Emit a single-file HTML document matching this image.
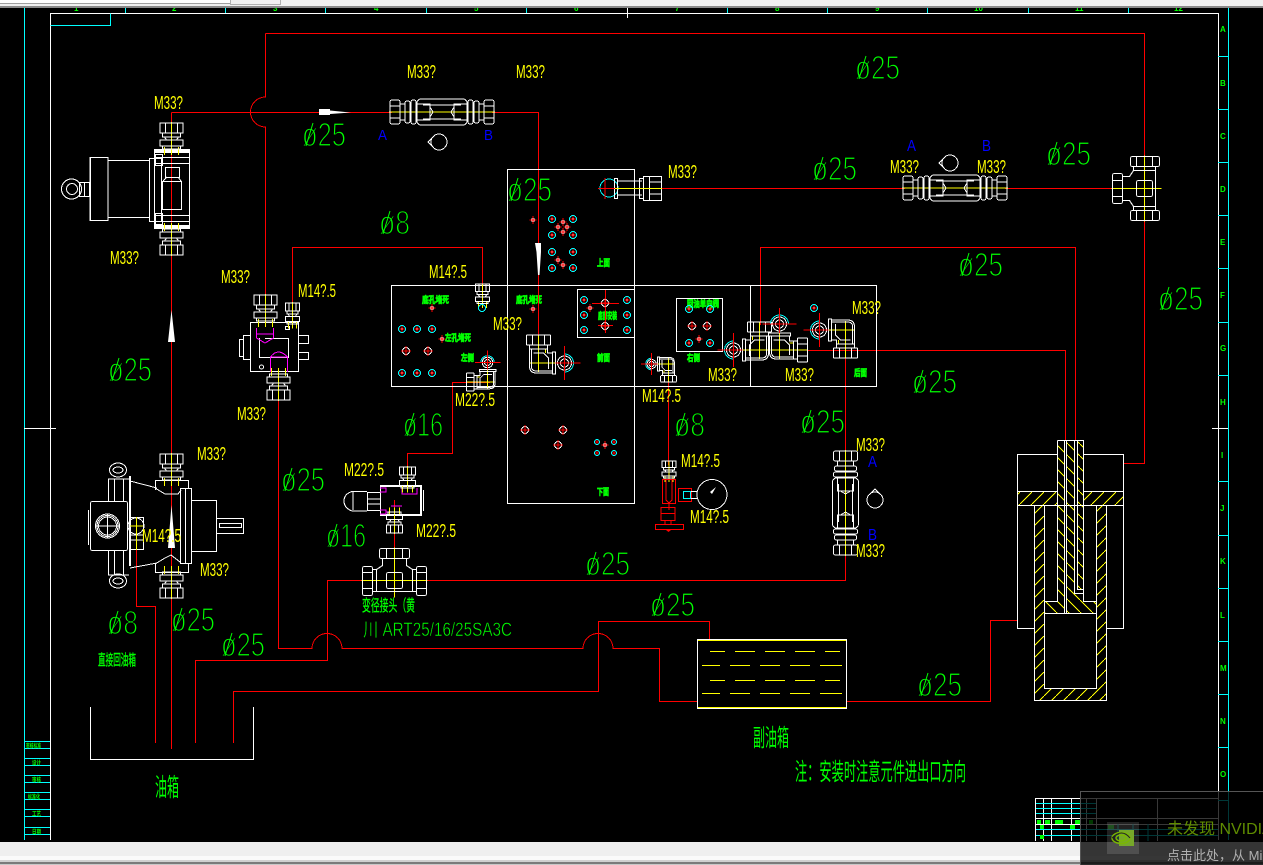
<!DOCTYPE html>
<html><head><meta charset="utf-8"><style>
html,body{margin:0;padding:0;background:#000;width:1263px;height:865px;overflow:hidden}
svg{display:block;position:absolute;left:0;top:0}
svg *{vector-effect:non-scaling-stroke}
.l{fill:none;shape-rendering:crispEdges;stroke-width:1}
.w{stroke:#fff}.r{stroke:#f00}.y{stroke:#ff0}.c{stroke:#0ff}.m{stroke:#f0f}
text{font-family:"Liberation Sans","Noto Sans CJK SC",sans-serif;stroke:none}
.yt{fill:#ff0;font-size:18px;stroke:#000;stroke-width:.2px}
.gt{fill:#0f0;font-size:33px;stroke:#000;stroke-width:1.35px}
.cn{fill:#0f0}
.sm{fill:#0f0;font-size:9px;font-weight:bold;stroke:#0f0;stroke-width:.7px}
.tk{fill:#0f0;font-size:8px;font-weight:bold}
.tb{fill:#0f0;font-size:6px;font-weight:bold;stroke:#0f0;stroke-width:.5px}
.bl{fill:#00f;font-size:16px}
</style></head><body>
<svg width="1263" height="865" viewBox="0 0 1263 865" xmlns="http://www.w3.org/2000/svg">
<defs>
<pattern id="hf" width="12" height="12" patternUnits="userSpaceOnUse"><path d="M0 12L12 0" stroke="#ff0" stroke-width="1" fill="none" shape-rendering="crispEdges"/></pattern>
<pattern id="hb" width="12" height="12" patternUnits="userSpaceOnUse"><path d="M0 0L12 12" stroke="#ff0" stroke-width="1" fill="none" shape-rendering="crispEdges"/></pattern>
<g id="f">
 <path class="l y" d="M0 -1V32M-7 24V32M7 24V32"/>
 <g class="l w"><rect x="-11.5" y="0" width="23" height="10"/><path d="M-6 0V10M6 0V10M-7 14L-5 17M7 14L5 17"/><rect x="-9" y="10" width="18" height="4"/><rect x="-11.5" y="17" width="23" height="6"/><rect x="-9" y="23" width="18" height="3"/></g>
</g>
<g id="m">
 <path class="l y" d="M-53 0H53"/>
 <g class="l w">
 <rect x="-52" y="-12" width="10" height="24" rx="2"/><path d="M-52 -6H-42M-52 6H-42"/><rect x="-42" y="-8" width="5" height="16"/><rect x="-37" y="-11" width="5" height="22" rx="2"/><rect x="-31" y="-12" width="5" height="24" rx="2"/>
 <rect x="42" y="-12" width="10" height="24" rx="2"/><path d="M42 -6H52M42 6H52"/><rect x="37" y="-8" width="5" height="16"/><rect x="32" y="-11" width="5" height="22" rx="2"/><rect x="26" y="-12" width="5" height="24" rx="2"/>
 <rect x="-25" y="-13" width="50" height="26" rx="4"/><path d="M-19 -7H19M-19 7H19"/><rect x="-25" y="-8" width="13" height="16"/><rect x="12" y="-8" width="13" height="16"/><path d="M-12 -5L-9 0L-12 5M12 -5L9 0L12 5"/>
 </g>
</g>
<g id="t">
 <path class="l y" d="M-33 0H17M0 -33V33M-11 -22V-18M11 -22V-18M-11 18V22M11 18V22"/>
 <g class="l w">
 <rect x="-14" y="-32" width="29" height="10" rx="2"/><path d="M-8 -32V-22M8 -32V-22"/>
 <rect x="-14" y="22" width="29" height="10" rx="2"/><path d="M-8 22V32M8 22V32"/>
 <rect x="-32" y="-15" width="10" height="30" rx="2"/><path d="M-32 -8H-22M-32 8H-22"/>
 <path d="M-22 -12H-15L-11 -18V-22M-22 12H-15L-11 18V22M11 -22V22"/><rect x="-8" y="-8" width="16" height="16" rx="2"/><path d="M-11 -18H11M-11 18H11"/>
 </g>
</g>
<g id="e">
 <path class="l y" d="M0 -28V9M-9 0H17M-7 -14V-10M7 -14V-10"/>
 <g class="l w">
 <rect x="-12" y="-28" width="24" height="10" rx="1"/><path d="M-6 -28V-18M6 -28V-18"/><rect x="-9" y="-18" width="18" height="4"/>
 <path d="M-9 -14V3Q-9 10 -2 10H14V-10H9V-14M-7 -14V4Q-7 8 -2 8H14"/><path d="M-5 -10H5L10 -5V6"/><rect x="14" y="-11" width="3" height="22"/>
 <circle cx="26" cy="0" r="7"/><circle cx="26" cy="0" r="4"/>
 </g>
 <path class="l c" d="M26 -9A9 9 0 0 1 26 9"/>
 <path class="l r" d="M17 0H42M26 -17V17"/>
</g>
<g id="h"><circle class="l c" r="3.5"/><circle r="1.2" fill="#fff"/><path class="l r" d="M-3 0H3M0 -3V3"/></g>
<g id="hs"><circle class="l c" r="2.5"/><path class="l r" d="M-2 0H2M0 -2V2"/></g>
<g id="x"><circle class="l w" r="3.5"/><path class="l r" d="M-5 0H5M0 -5V5"/></g>
<g id="xs"><circle r="2" fill="#fff"/><path class="l r" d="M-3.5 0H3.5M0 -4V4"/></g>
<g id="cv"><circle class="l w" r="8"/><path class="l w" d="M-5 -6L-11 0L-5 6"/></g>
</defs>
<rect width="1263" height="865" fill="#000"/>

<!-- green dimension text -->
<text class="gt" x="302" y="146" textLength="44" lengthAdjust="spacingAndGlyphs">ø25</text>
<text class="gt" x="855" y="79" textLength="45" lengthAdjust="spacingAndGlyphs">ø25</text>
<text class="gt" x="812" y="180" textLength="45" lengthAdjust="spacingAndGlyphs">ø25</text>
<text class="gt" x="1046" y="165" textLength="45" lengthAdjust="spacingAndGlyphs">ø25</text>
<text class="gt" x="507" y="201" textLength="45" lengthAdjust="spacingAndGlyphs">ø25</text>
<text class="gt" x="379" y="234" textLength="31" lengthAdjust="spacingAndGlyphs">ø8</text>
<text class="gt" x="958" y="276" textLength="45" lengthAdjust="spacingAndGlyphs">ø25</text>
<text class="gt" x="1158" y="310" textLength="45" lengthAdjust="spacingAndGlyphs">ø25</text>
<text class="gt" x="108" y="381" textLength="44" lengthAdjust="spacingAndGlyphs">ø25</text>
<text class="gt" x="912" y="393" textLength="45" lengthAdjust="spacingAndGlyphs">ø25</text>
<text class="gt" x="800" y="433" textLength="45" lengthAdjust="spacingAndGlyphs">ø25</text>
<text class="gt" x="281" y="491" textLength="44" lengthAdjust="spacingAndGlyphs">ø25</text>
<text class="gt" x="403" y="436" textLength="40" lengthAdjust="spacingAndGlyphs">ø16</text>
<text class="gt" x="326" y="547" textLength="40" lengthAdjust="spacingAndGlyphs">ø16</text>
<text class="gt" x="585" y="575" textLength="45" lengthAdjust="spacingAndGlyphs">ø25</text>
<text class="gt" x="650" y="616" textLength="45" lengthAdjust="spacingAndGlyphs">ø25</text>
<text class="gt" x="107" y="634" textLength="31" lengthAdjust="spacingAndGlyphs">ø8</text>
<text class="gt" x="171" y="631" textLength="44" lengthAdjust="spacingAndGlyphs">ø25</text>
<text class="gt" x="221" y="656" textLength="44" lengthAdjust="spacingAndGlyphs">ø25</text>
<text class="gt" x="674" y="436" textLength="31" lengthAdjust="spacingAndGlyphs">ø8</text>
<text class="gt" x="917" y="696" textLength="45" lengthAdjust="spacingAndGlyphs">ø25</text>
<path fill="none" stroke="#0f0" stroke-width="1" d="M306 146l7-23M859 79l7-23M816 180l7-23M1050 165l7-23M511 201l7-23M383 234l7-23M962 276l7-23M1162 310l7-23M112 381l7-23M916 393l7-23M804 433l7-23M285 491l7-23M407 436l7-23M330 547l7-23M589 575l7-23M654 616l7-23M111 634l7-23M175 631l7-23M225 656l7-23M678 436l7-23M921 696l7-23"/>

<!-- CJK labels -->
<text class="cn" x="362" y="611" font-size="16" textLength="53" lengthAdjust="spacingAndGlyphs" stroke="#0f0" stroke-width=".3" style="stroke:#0f0;stroke-width:.3px">变径接头（黄</text>
<text class="cn" x="363" y="636" font-size="19" textLength="149" lengthAdjust="spacingAndGlyphs" style="stroke:#000;stroke-width:.5px">川 ART25/16/25SA3C</text>
<text class="cn" x="98" y="665" font-size="15" textLength="38" lengthAdjust="spacingAndGlyphs" style="stroke:#0f0;stroke-width:.4px">直接回油箱</text>
<text class="cn" x="155" y="796" font-size="25" textLength="24" lengthAdjust="spacingAndGlyphs">油箱</text>
<text class="cn" x="753" y="746" font-size="24" textLength="36" lengthAdjust="spacingAndGlyphs">副油箱</text>
<text class="cn" x="795" y="780" font-size="24" textLength="171" lengthAdjust="spacingAndGlyphs">注：安装时注意元件进出口方向</text>

<!-- small bold labels -->
<text class="sm" x="422" y="303" textLength="27" lengthAdjust="spacingAndGlyphs">底孔堵死</text>
<text class="sm" x="516" y="303" textLength="26" lengthAdjust="spacingAndGlyphs">底孔堵死</text>
<text class="sm" x="445" y="341" textLength="26" lengthAdjust="spacingAndGlyphs">左孔堵死</text>
<text class="sm" x="461" y="361" textLength="13" lengthAdjust="spacingAndGlyphs">左侧</text>
<text class="sm" x="597" y="361" textLength="13" lengthAdjust="spacingAndGlyphs">前面</text>
<text class="sm" x="597" y="266" textLength="13" lengthAdjust="spacingAndGlyphs">上面</text>
<text class="sm" x="598" y="319" textLength="19" lengthAdjust="spacingAndGlyphs">底部安装</text>
<text class="sm" x="687" y="307" textLength="32" lengthAdjust="spacingAndGlyphs">回油单向阀</text>
<text class="sm" x="687" y="361" textLength="13" lengthAdjust="spacingAndGlyphs">右侧</text>
<text class="sm" x="854" y="376" textLength="13" lengthAdjust="spacingAndGlyphs">后面</text>
<text class="sm" x="597" y="495" textLength="12" lengthAdjust="spacingAndGlyphs">下面</text>

<!-- frame -->
<g class="l">
 <path class="c" d="M24.5 8V840M1228.5 8V840"/>
 <path class="w" d="M50.5 840V13.5H1218.5V840"/>
 <path class="c" d="M50.5 25.5H110.5V13.5"/>
 <path class="c" d="M125.5 8V13M225.5 8V13M325.5 8V13M426.5 8V13M526.5 8V13M727.5 8V13M827.5 8V13M927.5 8V13M1028.5 8V13M1128.5 8V13"/>
 <path class="w" d="M627.5 8V18"/>
 <path class="w" d="M24 428.5H56M1212 428.5H1228"/>
 <path class="c" d="M1218 56.5H1228M1218 109.5H1228M1218 162.5H1228M1218 215.5H1228M1218 268.5H1228M1218 322.5H1228M1218 375.5H1228M1218 481.5H1228M1218 535.5H1228M1218 588.5H1228M1218 641.5H1228M1218 694.5H1228M1218 747.5H1228M1218 800.5H1228"/>
 <path class="c" d="M24 741.5H50M24 748.5H50M24 758.5H50M24 765.5H50M24 775.5H50M24 782.5H50M24 792.5H50M24 799.5H50M24 809.5H50M24 816.5H50M24 827.5H50M24 834.5H50"/>
</g>
<g class="tk">
 <text x="74" y="11">1</text><text x="172" y="11">2</text><text x="273" y="11">3</text><text x="374" y="11">4</text><text x="474" y="11">5</text><text x="574" y="11">6</text><text x="675" y="11">7</text><text x="775" y="11">8</text><text x="875" y="11">9</text><text x="974" y="11">10</text><text x="1075" y="11">11</text><text x="1174" y="11">12</text>
 <text x="1220" y="32">A</text><text x="1220" y="86">B</text><text x="1220" y="139">C</text><text x="1220" y="192">D</text><text x="1220" y="245">E</text><text x="1220" y="298">F</text><text x="1220" y="351">G</text><text x="1220" y="405">H</text><text x="1221" y="458">I</text><text x="1220" y="511">J</text><text x="1220" y="564">K</text><text x="1220" y="618">L</text><text x="1220" y="671">M</text><text x="1220" y="724">N</text><text x="1220" y="777">O</text>
</g>
<g class="tb">
 <text x="26" y="748" textLength="15" lengthAdjust="spacingAndGlyphs">审核标准</text>
 <text x="32" y="765" textLength="9" lengthAdjust="spacingAndGlyphs">设计</text><text x="32" y="782" textLength="9" lengthAdjust="spacingAndGlyphs">审核</text>
 <text x="28" y="799" textLength="12" lengthAdjust="spacingAndGlyphs">标准化</text>
 <text x="32" y="816" textLength="9" lengthAdjust="spacingAndGlyphs">工艺</text><text x="32" y="834" textLength="9" lengthAdjust="spacingAndGlyphs">日期</text>
</g>

<!-- pipes -->
<g class="l r">
 <path d="M265.5 33.5H1144.5V463.5H1123"/>
 <path d="M265.5 33.5V97A15 15 0 0 0 265.5 127V296"/>
 <path d="M171.5 112.5H392M492 112.5H538.5V340"/>
 <path d="M171.5 112.5V749"/>
 <path d="M660 188.5H905M1005 188.5H1132"/>
 <path d="M278.5 372V648.5H312A15 15 0 0 1 342 648.5H583A15 15 0 0 1 613 648.5H659.5V701.5H697M847 701.5H990.5V620.5H1017"/>
 <path d="M195.5 743V660.5H327.5V580.5H845.5V555M845.5 451V350"/>
 <path d="M233.5 743V691.5H598.5V621.5H709.5V639"/>
 <path d="M155.5 743V606.5H136.5V520"/>
 <path d="M808 350.5H1065.5V440M760.5 325V247.5H1075.5V440"/>
 <path d="M292.5 305V247.5H482.5V286"/>
 <path d="M490 382.5H452.5V453.5H407.5V470"/>
 <path d="M394.5 500V548"/>
 <path d="M668.5 382V465"/>
</g>

<!-- tank -->
<path class="l w" d="M90.5 707V759.5H253.5V707"/>
<!-- reservoir -->
<rect class="l w" x="697.5" y="639.5" width="149" height="69"/>
<path class="l y" d="M698 640.5H846M698 707.5H846" />
<path class="l y" d="M710 651.5H725M735 651.5H755M765 651.5H785M795 651.5H815M825 651.5H840M702 665.5H720M730 665.5H750M760 665.5H780M790 665.5H810M820 665.5H842M710 680.5H725M735 680.5H755M765 680.5H785M795 680.5H815M825 680.5H840M702 693.5H720M730 693.5H750M760 693.5H780M790 693.5H810M820 693.5H842"/>

<!-- plates -->
<g class="l w">
 <rect x="391.5" y="285.5" width="485" height="101"/>
 <rect x="507.5" y="169.5" width="127" height="334"/>
 <path d="M750.5 285V386"/>
 <rect x="577.5" y="289.5" width="57" height="48"/>
 <rect x="676.5" y="298.5" width="46" height="53"/>
</g>
<path class="l r" d="M592 303.5H619M605.5 290V316M598 325.5H613M605.5 316V333"/>
<!-- holes -->
<use href="#h" x="552" y="219"/><use href="#h" x="573" y="219"/><use href="#h" x="552" y="235"/><use href="#h" x="573" y="235"/><use href="#h" x="552" y="252"/><use href="#h" x="573" y="252"/><use href="#h" x="552" y="268"/><use href="#h" x="573" y="268"/>
<use href="#xs" x="533" y="220"/><use href="#xs" x="563" y="222"/><use href="#xs" x="558" y="227"/><use href="#xs" x="567" y="227"/><use href="#xs" x="563" y="232"/><use href="#xs" x="558" y="260"/><use href="#xs" x="563" y="265"/><use href="#xs" x="432" y="308"/><use href="#xs" x="533" y="309"/>
<use href="#h" x="402" y="329"/><use href="#h" x="417" y="329"/><use href="#h" x="432" y="329"/><use href="#h" x="402" y="373"/><use href="#h" x="417" y="373"/><use href="#h" x="432" y="373"/>
<use href="#x" x="406" y="351"/><use href="#x" x="428" y="351"/><use href="#xs" x="442" y="339"/>
<use href="#h" x="584" y="300"/><use href="#h" x="627" y="300"/><use href="#h" x="584" y="315"/><use href="#h" x="627" y="315"/><use href="#h" x="584" y="330"/><use href="#h" x="627" y="330"/>
<use href="#x" x="605" y="303"/><use href="#x" x="605" y="326"/><use href="#xs" x="590" y="308"/>
<use href="#x" x="525" y="430"/><use href="#x" x="563" y="430"/><use href="#x" x="558" y="445"/>
<use href="#hs" x="597" y="442"/><use href="#hs" x="614" y="442"/><use href="#hs" x="597" y="453"/><use href="#hs" x="614" y="453"/><use href="#xs" x="605" y="445"/>
<use href="#h" x="689" y="309"/><use href="#h" x="710" y="309"/><use href="#h" x="689" y="343"/><use href="#h" x="710" y="343"/><use href="#x" x="692" y="326"/><use href="#x" x="707" y="326"/><use href="#xs" x="699" y="339"/>
<use href="#h" x="814" y="308"/>

<!-- top-left actuator -->
<g class="l w">
 <circle cx="71.5" cy="189" r="10"/><circle cx="72" cy="189" r="5.5"/>
 <rect x="79.5" y="182.5" width="10" height="14"/><path d="M84.5 182V196"/>
 <rect x="90" y="157.5" width="18" height="63"/><path d="M90.5 157V221"/>
 <path d="M108 160.5H149M108 217.5H149"/>
 <rect x="149.5" y="158.5" width="12" height="63"/>
 <rect x="154.5" y="149.5" width="35" height="79"/>
 <path d="M155 157.5H189M155 163.5H189M155 215.5H189M155 221.5H189"/>
 <rect x="155.5" y="154.5" width="7" height="11"/><rect x="155.5" y="213.5" width="7" height="11"/>
 <rect x="165.5" y="167.5" width="14" height="10"/><path d="M167 177L163 181M178 177L181 181"/>
 <rect x="162.5" y="181.5" width="19" height="28"/>
</g>
<rect x="154" y="149" width="36" height="4" fill="#fff"/><rect x="154" y="225" width="36" height="4" fill="#fff"/>
<use href="#f" transform="translate(171.5,123)"/><use href="#f" transform="translate(171.5,255) scale(1,-1)"/>

<!-- valve block -->
<g class="l w">
 <rect x="250.5" y="322.5" width="48" height="49"/><rect x="243.5" y="335.5" width="7" height="24"/><rect x="239.5" y="339.5" width="4" height="17"/>
 <rect x="298.5" y="335.5" width="10" height="8"/><rect x="298.5" y="352.5" width="10" height="7"/>
 <path d="M265 338.5H288.5V357.5H259.5V338"/>
 <circle cx="261.5" cy="367" r="2"/><rect x="285.5" y="326.5" width="4" height="3"/>
</g>
<path class="l m" d="M256.5 328V338L265 343L273.5 338V328M270.5 372V357Q278 347 287.5 357V372M257 334H273M271 357H287"/>
<use href="#f" transform="translate(265.5,295)"/><use href="#f" transform="translate(278.5,400) scale(1,-1)"/>
<use href="#f" transform="translate(292.5,303) scale(.6,.8)"/>

<!-- pump -->
<g class="l w">
 <ellipse cx="118" cy="470" rx="8.5" ry="7"/><ellipse cx="118" cy="470" rx="5" ry="3"/>
 <ellipse cx="118" cy="581" rx="8.5" ry="7"/><ellipse cx="118" cy="581" rx="5" ry="3"/>
 <path d="M108.5 479V501M114.5 479V501M123.5 479V501M108.5 551V575M114.5 551V575M123.5 551V575M108 479H129M108 575H129"/>
 <rect x="90.5" y="501.5" width="37" height="49" rx="2"/><path d="M88.5 510V545"/>
 <path d="M129.5 476V566M130.5 476V566"/>
 <circle cx="107.5" cy="526" r="12"/><circle cx="107.5" cy="526" r="10.5"/><circle cx="107.5" cy="526" r="9"/>
 <path d="M96 526H119M107.5 514V538"/>
 <path d="M130 481L157 488M130 568L157 563"/>
 <path d="M155.5 490V480.5H188.5V488M155.5 563V572.5H188.5V564M155 488L165 494H178L181 490M155 564L165 558L171 555L180 562"/>
 <rect x="180.5" y="488.5" width="11" height="75"/><path d="M185.5 489V563"/>
 <rect x="191.5" y="500.5" width="25" height="51"/>
 <rect x="216.5" y="518.5" width="27" height="15"/><rect x="219.5" y="523.5" width="22" height="4"/>
 <circle cx="136" cy="526" r="8"/><rect x="130.5" y="517.5" width="13" height="32"/><path d="M130 535H143M130 540H143"/>
</g>
<path class="l y" d="M136.5 517V550M130 526H143"/>
<use href="#f" transform="translate(171.5,454)"/><use href="#f" transform="translate(171.5,598) scale(1,-1)"/>

<!-- arrows -->
<path fill="#fff" d="M171.5 310L175 342H168ZM171.5 505L175 548H168ZM319 109H330V110.5L345 112L351 112.5L330 114V115H319ZM535 243H541V252L539.5 275H538L536.5 252Z"/>

<!-- meters and fittings -->
<use href="#m" transform="translate(442,112)"/>
<use href="#m" transform="translate(955,188)"/>
<use href="#m" transform="translate(845.5,503) rotate(90)"/>
<use href="#cv" transform="translate(439,142)"/>
<use href="#cv" transform="translate(950,163)"/>
<use href="#cv" transform="translate(875,500) rotate(90)"/>
<use href="#t" transform="translate(1144.5,188.5)"/>
<use href="#t" transform="translate(394.5,580.5) rotate(90)"/>
<!-- upper plate fitting -->
<g class="l"><circle class="c" cx="609" cy="188" r="9"/><rect class="w" x="614.5" y="178.5" width="3" height="20"/><path class="w" d="M617 181H642M617 195H642"/><rect class="w" x="639.5" y="178.5" width="4" height="20"/><rect class="w" x="643.5" y="176.5" width="6" height="24"/><rect class="w" x="649.5" y="176.5" width="12" height="24"/><path class="w" d="M650 182H661M650 194H661"/><path class="y" d="M610 188.5H662"/><path class="r" d="M598 188.5H615M605 178V199"/></g>
<use href="#e" transform="translate(538.5,363)"/>
<use href="#e" transform="translate(845.5,330) rotate(180)"/>
<use href="#e" transform="translate(759.5,350) scale(-1,1)"/>
<use href="#e" transform="translate(779.5,350) rotate(90) scale(-1,1)"/>
<use href="#e" transform="translate(487.5,382) rotate(-90) scale(.75)"/>
<use href="#e" transform="translate(668.5,364) rotate(180) scale(.65)"/>
<use href="#f" transform="translate(482.5,284) scale(.6,.75)"/>
<circle class="l c" cx="482" cy="308" r="3.5"/>

<!-- sensor -->
<g class="l w">
 <rect x="380.5" y="485.5" width="41" height="30"/><path d="M381 486.5H421M381 514.5H421M420.5 486V515M423.5 490V511"/>
 <rect x="367.5" y="492.5" width="13" height="18"/><path d="M367 499H380M367 504H380"/>
 <path d="M367 491.5H352Q344 494 344 501Q344 508 352 511H367M353 492V510"/>
</g>
<path class="l m" d="M380 488h6v4h-6M380 510h6v4h-6M402 488V494H417V488M391 506H402M386 512H400"/>
<use href="#f" transform="translate(407.5,467) scale(.7,.8)"/>
<use href="#f" transform="translate(394.5,533) scale(.7,-.8)"/>

<!-- gauge -->
<use href="#f" transform="translate(669,461) scale(.6,.65)"/>
<g class="l">
 <rect class="r" x="662.5" y="479.5" width="13" height="24"/><path class="r" d="M666 480V500L669 503L672 500V480M669 503V510"/>
 <rect class="r" x="678.5" y="488.5" width="13" height="13"/><rect class="c" x="683.5" y="491.5" width="7" height="7"/>
 <path class="w" d="M691 491.5H697M691 498.5H697"/>
 <circle class="w" cx="712" cy="494.5" r="15"/>
 <path class="r" d="M661 507.5H675V520.5H661ZM661 513.5H675M665 520V524M671 520V524"/><rect class="r" x="655.5" y="524.5" width="28" height="5"/>
</g>
<path fill="#fff" d="M716 487L710 492L712 494Z"/>
<path fill="#f00" d="M666 530H671L668.5 532Z"/>

<!-- right cylinder -->
<g>
 <rect x="1017" y="491" width="40" height="14" fill="url(#hf)"/><rect x="1083" y="491" width="40" height="14" fill="url(#hf)"/>
 <path fill="url(#hf)" d="M1034 505H1044V688H1096V505H1107V700H1034Z"/>
 <path fill="url(#hb)" d="M1057 440H1064V601H1057ZM1066 440H1074V593H1083V601H1096V613H1066ZM1044 601H1057L1064 601V613H1044ZM1077 440H1083V590H1077Z"/>
</g>
<g class="l w">
 <path d="M1034.5 628.5H1017.5V454.5H1057M1083 454.5H1123.5V628.5H1106.5"/>
 <path d="M1017.5 491.5H1057M1083 491.5H1123M1017.5 505.5H1057M1083 505.5H1123"/>
 <rect x="1034.5" y="505.5" width="72" height="195"/>
 <rect x="1044.5" y="613.5" width="52" height="75"/>
 <path d="M1044.5 505V613M1096.5 505V613"/>
 <path d="M1057.5 440.5H1083.5V601.5H1096M1057.5 440.5V601.5H1044M1064.5 441V613M1066.5 441V613M1074.5 441V593.5H1083M1077.5 441V590"/>
 <path d="M1077 589.5H1083"/>
</g>

<!-- yellow labels -->
<g class="yt">
<text x="154" y="109" textLength="29" lengthAdjust="spacingAndGlyphs">M33?</text>
<text x="407" y="78" textLength="29" lengthAdjust="spacingAndGlyphs">M33?</text>
<text x="516" y="78" textLength="29" lengthAdjust="spacingAndGlyphs">M33?</text>
<text x="110" y="264" textLength="29" lengthAdjust="spacingAndGlyphs">M33?</text>
<text x="221" y="283" textLength="29" lengthAdjust="spacingAndGlyphs">M33?</text>
<text x="493" y="330" textLength="29" lengthAdjust="spacingAndGlyphs">M33?</text>
<text x="668" y="178" textLength="29" lengthAdjust="spacingAndGlyphs">M33?</text>
<text x="890" y="173" textLength="29" lengthAdjust="spacingAndGlyphs">M33?</text>
<text x="977" y="173" textLength="29" lengthAdjust="spacingAndGlyphs">M33?</text>
<text x="852" y="314" textLength="29" lengthAdjust="spacingAndGlyphs">M33?</text>
<text x="708" y="381" textLength="29" lengthAdjust="spacingAndGlyphs">M33?</text>
<text x="785" y="381" textLength="29" lengthAdjust="spacingAndGlyphs">M33?</text>
<text x="237" y="420" textLength="29" lengthAdjust="spacingAndGlyphs">M33?</text>
<text x="197" y="460" textLength="29" lengthAdjust="spacingAndGlyphs">M33?</text>
<text x="200" y="576" textLength="29" lengthAdjust="spacingAndGlyphs">M33?</text>
<text x="856" y="451" textLength="29" lengthAdjust="spacingAndGlyphs">M33?</text>
<text x="856" y="557" textLength="29" lengthAdjust="spacingAndGlyphs">M33?</text>
<text x="429" y="278" textLength="38" lengthAdjust="spacingAndGlyphs">M14?.5</text>
<text x="298" y="297" textLength="38" lengthAdjust="spacingAndGlyphs">M14?.5</text>
<text x="642" y="402" textLength="39" lengthAdjust="spacingAndGlyphs">M14?.5</text>
<text x="681" y="467" textLength="39" lengthAdjust="spacingAndGlyphs">M14?.5</text>
<text x="690" y="523" textLength="39" lengthAdjust="spacingAndGlyphs">M14?.5</text>
<text x="142" y="542" textLength="39" lengthAdjust="spacingAndGlyphs">M14?.5</text>
<text x="344" y="476" textLength="40" lengthAdjust="spacingAndGlyphs">M22?.5</text>
<text x="455" y="406" textLength="40" lengthAdjust="spacingAndGlyphs">M22?.5</text>
<text x="416" y="537" textLength="40" lengthAdjust="spacingAndGlyphs">M22?.5</text>
</g>
<g class="bl">
<text x="378" y="140" font-size="15" textLength="9" lengthAdjust="spacingAndGlyphs">A</text>
<text x="484" y="140" font-size="15" textLength="9" lengthAdjust="spacingAndGlyphs">B</text>
<text x="907" y="151" textLength="9" lengthAdjust="spacingAndGlyphs">A</text>
<text x="982" y="151" textLength="9" lengthAdjust="spacingAndGlyphs">B</text>
<text x="868" y="467" textLength="9" lengthAdjust="spacingAndGlyphs">A</text>
<text x="868" y="540" textLength="9" lengthAdjust="spacingAndGlyphs">B</text>
</g>

<!-- title block bottom right -->
<g class="l">
 <path class="w" d="M1035.5 841V798.5H1218M1035.5 818.5H1218M1035.5 824.5H1218M1043.5 798V841M1051.5 798V841M1071.5 798V841M1086.5 798V841M1096.5 798V841M1157.5 798V841"/>
 <path class="c" d="M1036 803.5H1096M1036 808.5H1096M1036 813.5H1096M1036 829.5H1218M1036 835.5H1218M1118 824V841M1133 824V841M1148 824V841"/>
</g>
<g fill="#0f0"><rect x="1037" y="820" width="4" height="4"/><rect x="1045" y="820" width="5" height="4"/><rect x="1055" y="820" width="8" height="4"/><rect x="1075" y="820" width="5" height="4"/><rect x="1089" y="820" width="4" height="4"/><rect x="1040" y="825" width="4" height="4"/><rect x="1070" y="825" width="5" height="4"/><rect x="1108" y="825" width="6" height="4"/><rect x="1040" y="835" width="4" height="4"/></g>

<!-- chrome top -->
<rect x="0" y="0" width="1263" height="8" fill="#f0f0f0"/>
<rect x="0" y="0" width="231" height="3" fill="#fff"/>
<rect x="0" y="3" width="231" height="1" fill="#a0a0a0"/>
<rect x="231" y="0" width="50" height="4" fill="#f0f0f0"/>
<path d="M230.5 0V4.5H280.5V0" fill="none" stroke="#b0b0b0" shape-rendering="crispEdges"/>
<rect x="0" y="6" width="1263" height="2" fill="#8a8a8a"/>
<!-- chrome bottom -->
<rect x="0" y="842" width="1263" height="23" fill="#efefef"/>
<rect x="0" y="856" width="1263" height="4" fill="#fafafa"/>
<rect x="0" y="860" width="1263" height="2" fill="#d0d0d0"/>
<rect x="0" y="862" width="1263" height="2" fill="#7a7a7a"/>
<rect x="0" y="864" width="1263" height="1" fill="#c8c8c8"/>

<!-- NVIDIA toast -->
<rect x="1080.5" y="791.5" width="183" height="74" fill="rgba(0,0,0,.78)" stroke="#555" shape-rendering="crispEdges"/>
<rect x="1107" y="822" width="32" height="32" fill="rgba(255,255,255,.13)"/>
<rect x="1119" y="830" width="15" height="16" fill="#76a82a"/>
<g fill="none" stroke="#7ab800" stroke-width="1.4"><ellipse cx="1121" cy="838" rx="9" ry="5.5"/><ellipse cx="1121" cy="838" rx="5" ry="3"/></g>
<path d="M1112 838Q1122 828 1130 838" fill="none" stroke="#222" stroke-width="1"/>
<text x="1167" y="834" font-size="16" fill="#5f8c00">未发现 NVIDIA</text>
<text x="1167" y="860" font-size="13" fill="#b0b0b0">点击此处，从 Mi</text>
</svg>
</body></html>
